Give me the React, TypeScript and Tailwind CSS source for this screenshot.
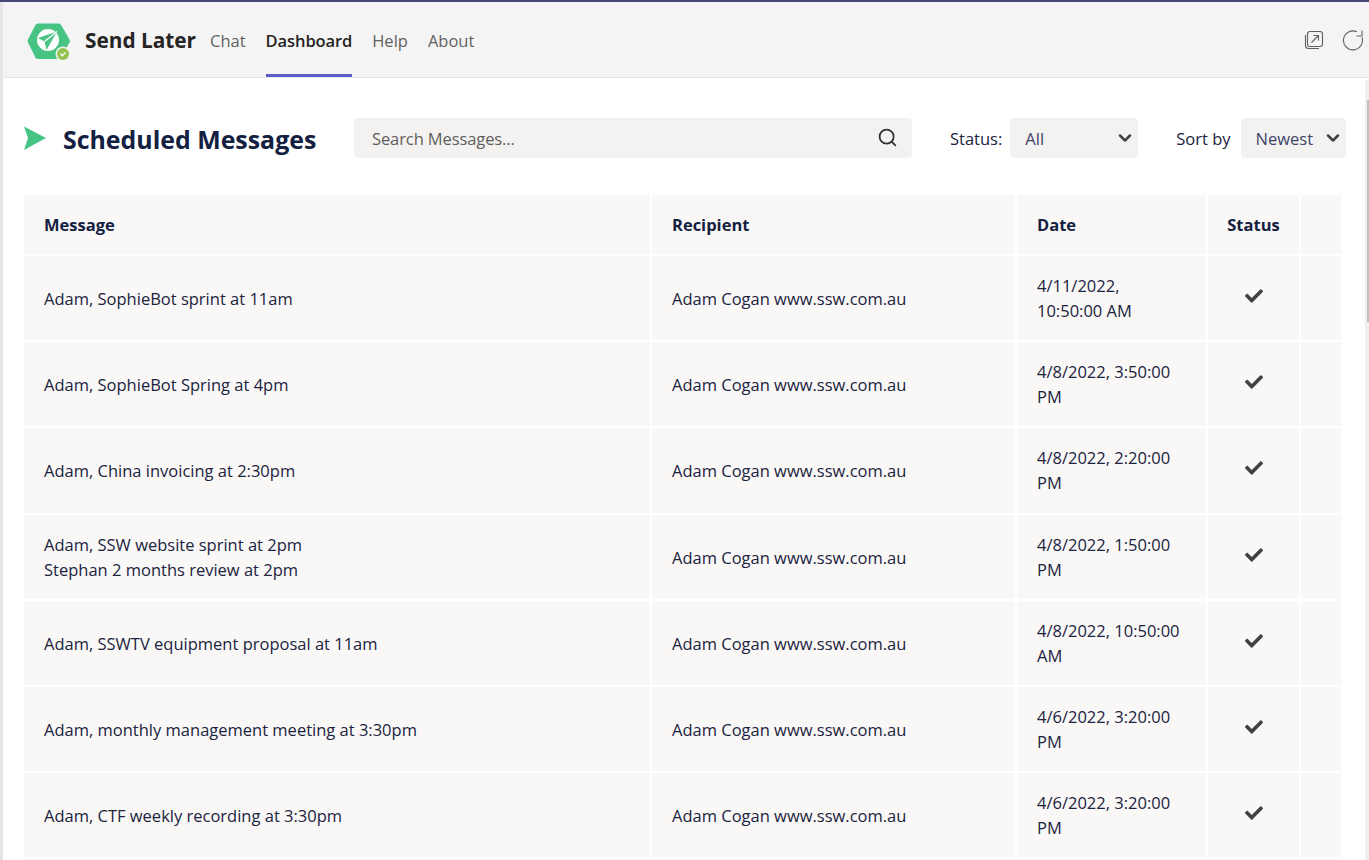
import { Search, ChevronDown } from 'lucide-react';
import { FaCheck } from 'react-icons/fa';

const rows = [
  { message: ['Adam, SophieBot sprint at 11am'], date: ['4/11/2022,', '10:50:00 AM'] },
  { message: ['Adam, SophieBot Spring at 4pm'], date: ['4/8/2022, 3:50:00', 'PM'] },
  { message: ['Adam, China invoicing at 2:30pm'], date: ['4/8/2022, 2:20:00', 'PM'] },
  { message: ['Adam, SSW website sprint at 2pm', 'Stephan 2 months review at 2pm'], date: ['4/8/2022, 1:50:00', 'PM'] },
  { message: ['Adam, SSWTV equipment proposal at 11am'], date: ['4/8/2022, 10:50:00', 'AM'] },
  { message: ['Adam, monthly management meeting at 3:30pm'], date: ['4/6/2022, 3:20:00', 'PM'] },
  { message: ['Adam, CTF weekly recording at 3:30pm'], date: ['4/6/2022, 3:20:00', 'PM'] },
  { message: [''], date: ['', ''] },
];

function Logo() {
  return (
    <svg width="44" height="40" viewBox="0 0 44 40" className="mt-[5px] shrink-0">
      <path d="M11 1.500h20.500a3 3 0 0 1 2.600 1.500l8.400 14.500a3 3 0 0 1 0 3L34 35.500a3 3 0 0 1-2.600 1.500H11a3 3 0 0 1-2.600-1.500L1 20.500a3 3 0 0 1 0-3L8.400 3A3 3 0 0 1 11 1.500z" fill="#47c384" />
      <circle cx="21" cy="18" r="11" fill="#fff" />
      <path d="M30 9.500 L11 16 L17.500 19.500 L19.500 28 Z" fill="#47c384" />
      <path d="M30 9.500 L17.500 19.500" stroke="#fff" strokeWidth="1.500" />
      <circle cx="36" cy="32" r="7.500" fill="#f4f4f4" />
      <circle cx="36" cy="32" r="6" fill="#92c353" />
      <path d="M33.500 32l1.800 1.800 3.200-3.400" fill="none" stroke="#fff" strokeWidth="1.300" />
    </svg>
  );
}

function PopOut() {
  return (
    <svg width="20" height="20" viewBox="0 0 20 20" fill="none" stroke="#616161" strokeWidth="1.100">
      <rect x="3.500" y="1.500" width="15" height="15" rx="2.500" />
      <path d="M1.500 5v10.500a3 3 0 0 0 3 3H15" />
      <path d="M7.500 12.500l7-7M9.500 5.500h5v5" />
    </svg>
  );
}

function Refresh() {
  return (
    <svg width="22" height="22" viewBox="0 0 22 22" fill="none" stroke="#616161" strokeWidth="1.100">
      <path d="M20 8.500A9.500 9.500 0 1 1 15 2.800" />
      <path d="M20 1.500V7h-5.500" />
    </svg>
  );
}

function Row({ message, date }: { message: string[]; date: string[] }) {
  return (
    <div className="flex h-[84.200px] shrink-0 gap-[2px]">
      <div className="flex w-[626px] flex-col justify-center bg-[#f9f8f7] pl-[20px] pt-[1px] leading-[25px]">
        {message.map((line) => (
          <div key={line}>{line}</div>
        ))}
      </div>
      <div className="flex w-[363px] items-center bg-[#f9f8f7] pl-[20px] pt-[1px] leading-[25px]">{message[0] && 'Adam Cogan www.ssw.com.au'}</div>
      <div className="flex w-[189px] flex-col justify-center bg-[#f9f8f7] pl-[20px] leading-[25px]">
        {date.map((line, i) => (
          <div key={i}>{line}</div>
        ))}
      </div>
      <div className="flex w-[91px] items-center justify-center bg-[#f9f8f7] pb-[4px]">
        {message[0] && <FaCheck size={18} className="text-[#424242]" />}
      </div>
      <div className="w-[40px] bg-[#f9f8f7]" />
    </div>
  );
}

export default function App() {
  return (
    <div className="relative flex h-[860px] flex-col overflow-hidden bg-white font-['Open_Sans',sans-serif] text-[16.500px] text-[#1b2340]">
      <div className="h-[2px] shrink-0 bg-[#464775]" />
      {/* Header */}
      <div className="flex h-[76px] shrink-0 items-center border-b border-[#e6e6e6] bg-[#f4f4f4] pl-[27px] pr-[5px]">
        <Logo />
        <div className="ml-[14px] pt-[2px] text-[20.800px] font-bold text-[#252423]">Send Later</div>
        <div className="ml-[14px] flex h-full items-center gap-[20px] text-[#616161]">
          <div className="pt-[4px]">Chat</div>
          <div className="relative flex h-full items-center pt-[4px] font-semibold tracking-[-0.1px] text-[#252423]">
            Dashboard
            <div className="absolute bottom-0 left-0 right-0 h-[3px] bg-[#5b5fc7]" />
          </div>
          <div className="pt-[4px]">Help</div>
          <div className="pt-[4px]">About</div>
        </div>
        <div className="ml-auto flex items-center gap-[18px]">
          <PopOut />
          <Refresh />
        </div>
      </div>
      {/* Body */}
      <div className="relative flex min-h-0 flex-1 flex-col pl-[24px]">
        <div className="absolute right-0 top-[2px] h-[780px] w-[4px] bg-[#f0f0f0]" />
        <div className="absolute right-0 top-[22px] h-[222px] w-[2px] bg-[#c0c0c0]" />
        <div className="flex h-[117px] shrink-0 items-center pt-[2px]">
          <svg width="22" height="24" viewBox="0 0 22 24" className="shrink-0">
            <path d="M0 0.500L22 12 0 24 4 12z" fill="#47c384" />
          </svg>
          <h1 className="ml-[17px] w-[291px] pt-[5px] text-[24.900px] font-bold text-[#14203f]">Scheduled Messages</h1>
          <div className="flex h-[40px] w-[558px] items-center justify-between rounded-[4px] bg-[#f3f2f1] pl-[18px] pr-[14px] text-[#605e5c]">
            <span className="pt-[4px] tracking-[-0.1px]">Search Messages...</span>
            <Search size={21} strokeWidth={2} className="text-[#323130]" />
          </div>
          <div className="ml-[38px] pt-[4px]">Status:</div>
          <div className="ml-[8px] flex h-[40px] w-[128px] items-center justify-between rounded-[4px] bg-[#f3f2f1] pl-[15px] pr-[3px] text-[#3d4466]">
            <span className="pt-[4px]">All</span>
            <ChevronDown size={20} strokeWidth={3} className="text-[#424242]" />
          </div>
          <div className="ml-[38px] pt-[4px]">Sort by</div>
          <div className="ml-[10px] flex h-[40px] w-[105px] items-center justify-between rounded-[4px] bg-[#f3f2f1] pl-[15px] pr-[3px] text-[#3d4466]">
            <span className="pt-[4px]">Newest</span>
            <ChevronDown size={20} strokeWidth={3} className="text-[#424242]" />
          </div>
        </div>
        <div className="flex flex-col gap-[2px]">
          <div className="flex h-[59px] shrink-0 gap-[2px] font-bold text-[#14203f]">
            <div className="flex w-[626px] items-center bg-[#f9f8f7] pl-[20px] pt-[2px]">Message</div>
            <div className="flex w-[363px] items-center bg-[#f9f8f7] pl-[20px] pt-[2px]">Recipient</div>
            <div className="flex w-[189px] items-center bg-[#f9f8f7] pl-[20px] pt-[2px]">Date</div>
            <div className="flex w-[91px] items-center justify-center bg-[#f9f8f7] pt-[2px]">Status</div>
            <div className="w-[40px] bg-[#f9f8f7]" />
          </div>
          {rows.map((row, i) => (
            <Row key={i} message={row.message} date={row.date} />
          ))}
        </div>
      </div>
      <div className="absolute inset-y-0 left-0 top-[2px] w-[3px] bg-[#e5e5e5]" />
    </div>
  );
}
